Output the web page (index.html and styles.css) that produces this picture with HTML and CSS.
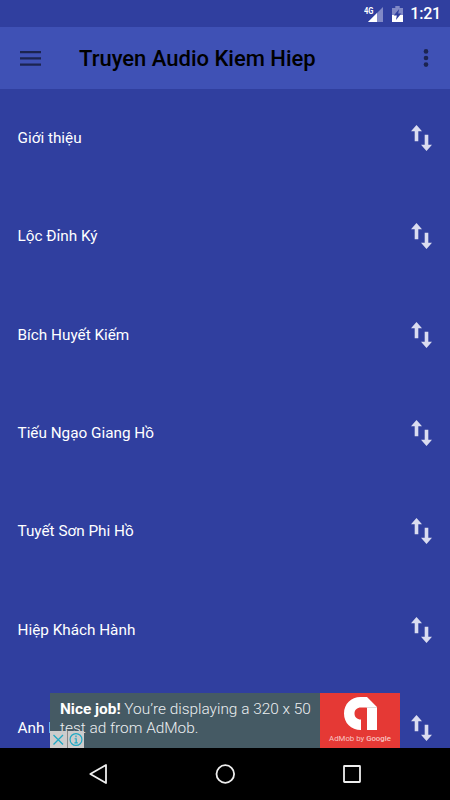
FILE: index.html
```html
<!DOCTYPE html>
<html lang="vi">
<head>
    <meta charset="UTF-8">
    <meta name="viewport" content="width=device-width, initial-scale=1.0">
    <title>Truyen Audio Kiem Hiep</title>
    <link rel="stylesheet" href="styles.css">
</head>
<body>

<svg class="symbols">
    <symbol id="swap" viewBox="0 0 21 26">
        <path d="M5.5 0L11 6.3H7.3V16.2H3.7V6.3H0ZM13.7 9.8H17.3V19.7H21L15.5 26L10 19.7H13.7Z"/>
    </symbol>
</svg>

<div class="status-bar">
    <svg class="signal" width="20" height="17" viewBox="0 0 20 17">
        <path d="M19 1V16H4Z" fill="#8189c6"/>
        <path d="M13 7V16H4Z" fill="#fff"/>
        <text x="0" y="8" textLength="9.5" lengthAdjust="spacingAndGlyphs">4G</text>
    </svg>
    <svg class="battery" width="11" height="16" viewBox="0 0 10 16" preserveAspectRatio="none">
        <path d="M3 0H7V2H10V9H0V2H3Z" fill="#8189c6"/>
        <path d="M0 9H10V16H0Z" fill="#fff"/>
        <path d="M6.5 3L1.6 9.5H4.4L3.6 14L8.4 7.5H5.6Z" fill="#303f9f"/>
    </svg>
    <span class="clock">1:21</span>
</div>

<header class="toolbar">
    <svg class="menu" width="21" height="15" viewBox="0 0 21 15">
        <path d="M0 0H21V2.3H0ZM0 6.2H21V8.5H0ZM0 12.4H21V14.7H0Z"/>
    </svg>
    <h1>Truyen Audio Kiem Hiep</h1>
    <svg class="more" width="6" height="18" viewBox="0 0 6 18">
        <circle cx="3" cy="2.4" r="2.3"/>
        <circle cx="3" cy="9" r="2.3"/>
        <circle cx="3" cy="15.6" r="2.3"/>
    </svg>
</header>

<main class="content">
    <ul class="list">
        <li><span>Giới thiệu</span><svg class="swap"><use href="#swap"/></svg></li>
        <li><span>Lộc Đỉnh Ký</span><svg class="swap"><use href="#swap"/></svg></li>
        <li><span>Bích Huyết Kiếm</span><svg class="swap"><use href="#swap"/></svg></li>
        <li><span>Tiếu Ngạo Giang Hồ</span><svg class="swap"><use href="#swap"/></svg></li>
        <li><span>Tuyết Sơn Phi Hồ</span><svg class="swap"><use href="#swap"/></svg></li>
        <li><span>Hiệp Khách Hành</span><svg class="swap"><use href="#swap"/></svg></li>
        <li><span>Anh H</span><svg class="swap"><use href="#swap"/></svg></li>
    </ul>

    <div class="ad">
        <p class="ad-text"><b>Nice job!</b> You’re displaying a 320 x 50<br>test ad from AdMob.</p>
        <div class="ad-brand">
            <svg width="33" height="33" viewBox="0 0 33 33">
                <path d="M16.5 0H23L33 10V33H23V10.5H17C13 10.5 10.5 13 10.5 16.5S13 22.5 17 22.5V33C7 33 0 26 0 16.5S7 0 16.5 0Z" fill="#fff"/>
                <path d="M23 10.5L22 10H33V11H23Z" fill="#ddd"/>
            </svg>
            <span>AdMob by <b>Google</b></span>
        </div>
        <div class="ad-choices">
            <svg width="17" height="17" viewBox="0 0 17 17">
                <path d="M3.5 4L13 13.5M13 4L3.5 13.5"/>
            </svg>
            <svg width="17" height="17" viewBox="0 0 17 17">
                <circle cx="8.5" cy="8.5" r="6.3"/>
                <path d="M8.5 4.3V6M7 7.7H8.7V12.2M6.8 12.2H10.4"/>
            </svg>
        </div>
    </div>
</main>

<nav class="nav-bar">
    <svg width="20" height="22" viewBox="0 0 20 22">
        <path d="M18 2V20L2.3 11Z"/>
    </svg>
    <svg width="20" height="22" viewBox="0 0 20 22">
        <circle cx="10.3" cy="11" r="8.8"/>
    </svg>
    <svg width="20" height="22" viewBox="0 0 20 22">
        <rect x="2" y="3" width="16" height="16" rx="0.5"/>
    </svg>
</nav>

</body>
</html>
```

FILE: styles.css
```css
* {
    box-sizing: border-box;
}
body {
    margin: 0;
    height: 800px;
    display: flex;
    flex-direction: column;
    font-family: Roboto, sans-serif;
    background-color: #303f9f;
    color: #fff;
    overflow: hidden;
}
svg {
    display: block;
    flex: none;
}
.symbols {
    position: absolute;
    width: 0;
    height: 0;
}
.status-bar {
    flex: none;
    height: 27px;
    display: flex;
    align-items: center;
    justify-content: flex-end;
    padding: 1px 9px 0 0;
}
.signal {
    margin: 0 8px 0 0;
}
.signal text {
    font-size: 9px;
    font-weight: 700;
    fill: #fff;
}
.battery {
    margin-right: 7px;
}
.clock {
    font-size: 16px;
    font-weight: 500;
    line-height: 20px;
    letter-spacing: -0.2px;
}
.toolbar {
    flex: none;
    height: 62px;
    display: flex;
    align-items: center;
    padding: 0 21px 0 20px;
    background-color: #3f51b5;
}
.toolbar h1 {
    flex: 1;
    margin: 2px 0 0 38px;
    font-size: 22px;
    font-weight: 500;
    line-height: 30px;
    color: #000;
}
.menu, .more {
    fill: #1c2450;
}
.content {
    position: relative;
    flex: 1;
    min-height: 0;
    overflow: hidden;
}
.list {
    margin: 0;
    padding: 0;
    list-style: none;
}
.list li {
    height: 98.33px;
    display: flex;
    align-items: center;
    justify-content: space-between;
    padding: 0 18px 0 17.5px;
    font-size: 15.3px;
}
.swap {
    width: 21px;
    height: 26px;
    fill: #dadcf0;
}
.ad {
    position: absolute;
    left: 50px;
    bottom: 0;
    width: 350px;
    height: 55px;
    display: flex;
    background-color: #455a64;
}
.ad-text {
    flex: 1;
    margin: 0;
    padding: 7px 0 0 10px;
    font-size: 15.4px;
    font-weight: 300;
    line-height: 18.5px;
    white-space: nowrap;
    color: #eceff1;
}
.ad-text b {
    font-weight: 700;
    color: #fff;
}
.ad-brand {
    width: 80px;
    display: flex;
    flex-direction: column;
    align-items: center;
    padding-top: 4px;
    background-color: #e53935;
}
.ad-brand span {
    margin-top: 3px;
    font-size: 7.8px;
    line-height: 12px;
    white-space: nowrap;
    color: #f9c5c3;
}
.ad-brand b {
    font-weight: 500;
}
.ad-choices {
    position: absolute;
    left: 0;
    bottom: 0;
    display: flex;
    background-color: #ccc;
}
.ad-choices svg {
    fill: none;
    stroke: #1fa9c4;
    stroke-width: 1.3;
}
.ad-choices svg + svg {
    border-left: 1px solid #888;
}
.nav-bar {
    flex: none;
    height: 52px;
    display: flex;
    align-items: center;
    justify-content: space-between;
    padding: 0 88px;
    background-color: #000;
}
.nav-bar svg {
    fill: none;
    stroke: #eee;
    stroke-width: 1.8;
    stroke-linejoin: round;
}
```
